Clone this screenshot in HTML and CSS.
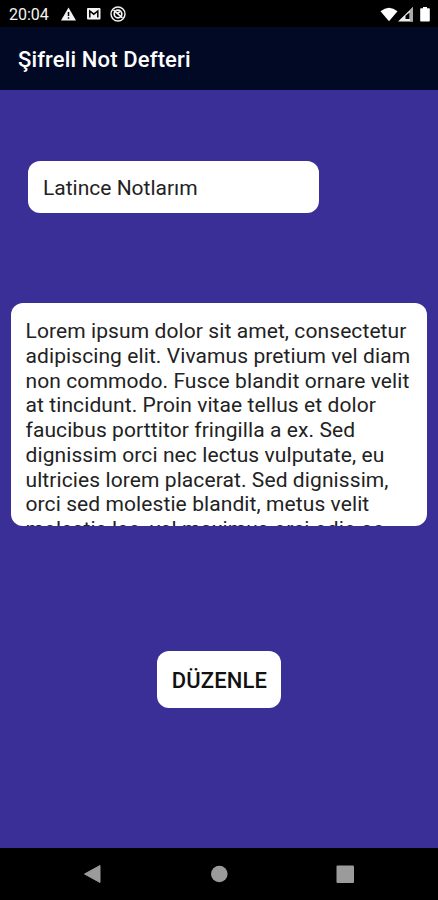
FILE: index.html
```html
<!DOCTYPE html>
<html lang="tr">
<head>
    <meta charset="UTF-8">
    <meta name="viewport" content="width=device-width, initial-scale=1.0">
    <title>Şifreli Not Defteri</title>
    <link rel="stylesheet" href="styles.css">
</head>
<body>

    <div class="status-bar">
        <span class="clock">20:04</span>
        <svg class="status-left" width="66" height="18" viewBox="0 0 66 18">
            <path d="M7.5 2.5L15 15.5H0Z" fill="#f4f4f4"/>
            <path d="M7.5 7v4M7.5 12.2v1.6" stroke="#000" stroke-width="1.5"/>
            <rect x="26" y="3" width="13.5" height="11.5" rx="1" fill="#f4f4f4"/>
            <path d="M28.8 12.5V6L32.8 9.2L36.8 6V12.5" fill="none" stroke="#000" stroke-width="1.5"/>
            <circle cx="57" cy="9" r="7" fill="none" stroke="#f4f4f4" stroke-width="1.4"/>
            <circle cx="57" cy="9" r="3.8" fill="none" stroke="#f4f4f4" stroke-width="1.7"/>
            <path d="M52.5 5.2L61.5 12.8M56 8.2l3-1.5" stroke="#f4f4f4" stroke-width="1.6"/>
        </svg>
        <svg class="status-right" width="52" height="18" viewBox="0 0 52 18">
            <path d="M.5 6.2Q9 -.8 17.5 6.2L9 16.2Z" fill="#fff"/>
            <path d="M18 16.5L33 2V16.5Z" fill="#ededed"/>
            <path d="M25.5 14V10.8L29.5 7.4V14Z" fill="#000"/>
            <path d="M30 5L33 2V16.5H30Z" fill="#aaa"/>
            <path d="M41 3.2h2V2h4v1.2h2q.8 0 .8.8v11.7q0 .8-.8.8h-8q-.8 0-.8-.8V4q0-.8.8-.8Z" fill="#fff"/>
        </svg>
    </div>

    <div class="app-bar">Şifreli Not Defteri</div>

    <div class="content">
        <div class="note-title">Latince Notlarım</div>
        <div class="note-text">Lorem ipsum dolor sit amet, consectetur
adipiscing elit. Vivamus pretium vel diam
non commodo. Fusce blandit ornare velit
at tincidunt. Proin vitae tellus et dolor
faucibus porttitor fringilla a ex. Sed
dignissim orci nec lectus vulputate, eu
ultricies lorem placerat. Sed dignissim,
orci sed molestie blandit, metus velit
molestie leo, vel maximus orci odio ac</div>
        <button class="edit-btn">DÜZENLE</button>
    </div>

    <div class="nav-bar">
        <svg width="438" height="52" viewBox="0 0 438 52">
            <path d="M84.5 26L100 17.5V34.5Z" fill="#9b9b9b" stroke="#9b9b9b" stroke-linejoin="round"/>
            <circle cx="219.3" cy="26" r="8.3" fill="#9b9b9b"/>
            <rect x="336.5" y="17.5" width="17.5" height="17.5" rx="1" fill="#9b9b9b"/>
        </svg>
    </div>

</body>
</html>
```

FILE: styles.css
```css
body {
    margin: 0;
    width: 438px;
    height: 900px;
    display: flex;
    flex-direction: column;
    overflow: hidden;
    background: #3a2f97;
    font-family: Roboto, sans-serif;
}
.status-bar {
    display: flex;
    align-items: center;
    height: 27px;
    padding: 0 6px 0 9px;
    background: #000;
    color: #f4f4f4;
}
.clock {
    width: 52px;
    font-size: 16px;
    line-height: 27px;
    padding-top: 2px;
    box-sizing: border-box;
}
.status-left {
    margin-top: 1px;
}
.status-right {
    margin-left: auto;
}
.app-bar {
    height: 63px;
    line-height: 66px;
    padding-left: 18px;
    background: #020924;
    color: #fff;
    font-size: 22px;
    font-weight: 500;
    letter-spacing: 0.14px;
}
.content {
    flex: 1;
    display: flex;
    flex-direction: column;
}
.note-title {
    width: 291px;
    height: 52px;
    margin: 71px 0 0 28px;
    padding-left: 15px;
    box-sizing: border-box;
    border-radius: 12px;
    background: #fff;
    color: #222;
    font-size: 21px;
    line-height: 54px;
}
.note-text {
    width: 416px;
    height: 223px;
    margin: 90px 0 0 11px;
    padding: 16px 0 0 14.5px;
    box-sizing: border-box;
    border-radius: 12px;
    background: #fff;
    color: #222;
    font-size: 21px;
    line-height: 24.75px;
    letter-spacing: 0.09px;
    white-space: pre;
    overflow: hidden;
}
.edit-btn {
    width: 124px;
    height: 57px;
    margin: 125px 0 0 157px;
    padding: 2px 0 0 1px;
    border: none;
    border-radius: 12px;
    background: #fff;
    color: #111;
    font-family: Roboto, sans-serif;
    font-size: 22px;
    font-weight: 500;
    letter-spacing: 0.15px;
}
.nav-bar {
    height: 52px;
    background: #000;
}
.nav-bar svg {
    display: block;
}
```
